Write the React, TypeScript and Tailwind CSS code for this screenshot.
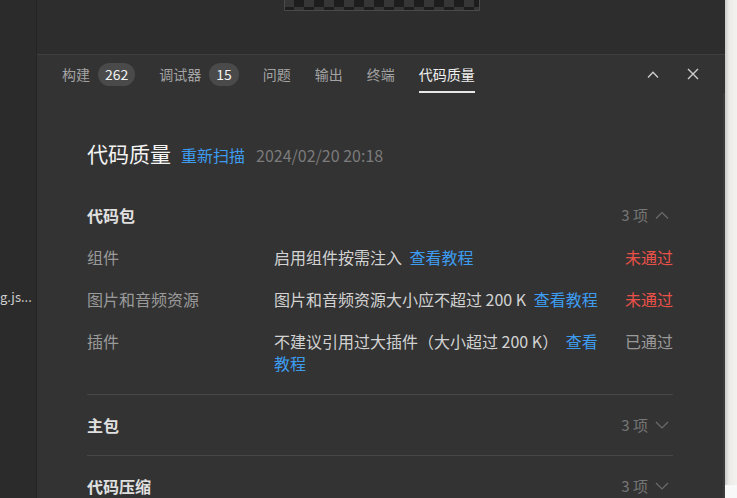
import React from 'react';

type Row = { label: string; desc: string; link: string; status: string; fail: boolean };

const rows: Row[] = [
  { label: '组件', desc: '启用组件按需注入 ', link: '查看教程', status: '未通过', fail: true },
  { label: '图片和音频资源', desc: '图片和音频资源大小应不超过 200 K ', link: '查看教程', status: '未通过', fail: true },
  { label: '插件', desc: '不建议引用过大插件（大小超过 200 K） ', link: '查看教程', status: '已通过', fail: false },
];

const tabs = [
  { name: '构建', badge: '262' },
  { name: '调试器', badge: '15' },
  { name: '问题' },
  { name: '输出' },
  { name: '终端' },
  { name: '代码质量', active: true },
];

function Chevron({ up, className }: { up?: boolean; className?: string }) {
  return (
    <svg width="14" height="8" viewBox="0 0 14 8" className={className} fill="none" stroke="currentColor" strokeWidth="1.2">
      {up ? <path d="M1 7.5 L7 1.5 L13 7.5" /> : <path d="M1 1 L7 7 L13 1" />}
    </svg>
  );
}

function Checker() {
  return (
    <svg width="196" height="11" className="block">
      <defs>
        <pattern id="chk" width="20" height="20" patternUnits="userSpaceOnUse" y="-13">
          <rect width="20" height="20" fill="#363636" />
          <rect width="10" height="10" fill="#1d1d1d" />
          <rect x="10" y="10" width="10" height="10" fill="#1d1d1d" />
        </pattern>
      </defs>
      <rect x="0" y="0" width="196" height="11" fill="url(#chk)" />
      <path d="M0.5 0 V10.5 H195.5 V0" stroke="#4a4a4a" fill="none" />
    </svg>
  );
}

function SectionHeader({ title, open }: { title: string; open?: boolean }) {
  return (
    <div className="flex h-[60px] items-center justify-between">
      <span className="text-[16px] font-bold text-[#e0e0e0]">{title}</span>
      <span className="flex items-center gap-[7px] text-[15px] text-[#767676]">
        3 项
        <Chevron up={open} className="mr-[4px] text-[#6c6c6c]" />
      </span>
    </div>
  );
}

export default function App() {
  return (
    <div className="flex h-[498px] w-[737px] overflow-hidden bg-[#333333] font-['Noto_Sans_CJK_SC',sans-serif]">
      {/* file tree */}
      <div className="w-[37px] shrink-0 overflow-hidden border-r border-[#242424] bg-[#2b2b2b] pt-[287px]">
        <div className="whitespace-nowrap text-[13px] text-[#cfcfcf]">g.js...</div>
      </div>

      <div className="flex w-[688px] shrink-0 flex-col">
        {/* preview area */}
        <div className="h-[55px] shrink-0 border-b border-[#3e3e3e] bg-[#2d2d2d] pl-[247px]">
          <Checker />
        </div>

        {/* tabs */}
        <div className="flex h-[38px] shrink-0 items-center pl-[25px] pr-[22px]">
          <div className="flex h-full items-center gap-[24px] text-[14px]">
            {tabs.map((t) => (
              <div key={t.name} className="flex h-full items-center gap-[8px]">
                <span
                  className={
                    t.active
                      ? 'flex h-full items-center border-b-2 border-[#e8e8e8] pt-[2px] text-[#f0f0f0]'
                      : 'text-[#a3a3a3]'
                  }
                >
                  {t.name}
                </span>
                {t.badge && (
                  <span className="flex h-[23px] items-center rounded-full bg-[#4a4a4a] px-[7px] text-[14px] text-[#f2f2f2]">
                    {t.badge}
                  </span>
                )}
              </div>
            ))}
          </div>
          <div className="ml-auto flex items-center gap-[20px] text-[#cfcfcf]">
            <span className="flex h-[20px] w-[20px] items-center justify-center">
              <svg width="12" height="7" viewBox="0 0 12 7" fill="none" stroke="currentColor" strokeWidth="1.3">
                <path d="M1 6.5 L6 1.2 L11 6.5" />
              </svg>
            </span>
            <span className="flex h-[20px] w-[20px] items-center justify-center">
              <svg width="12" height="12" viewBox="0 0 12 12" fill="none" stroke="currentColor" strokeWidth="1.4">
                <path d="M1 1 L11 11 M11 1 L1 11" />
              </svg>
            </span>
          </div>
        </div>

        {/* content */}
        <div className="relative flex-1 overflow-hidden">
          <div className="absolute right-0 top-0 h-full w-[2px] bg-[#3b3b3b]" />
          <div className="pl-[50px] pr-[52px] pt-[45px]">
            <div className="flex items-baseline leading-[30px]">
              <span className="text-[21px] text-[#f4f4f4]">代码质量</span>
              <span className="ml-[10px] text-[16px] text-[#3d9cf0]">重新扫描</span>
              <span className="ml-[11px] text-[16px] text-[#7b7b7b]">2024/02/20 20:18</span>
            </div>

            <div className="mt-[15px] border-b border-[#464646]">
              <SectionHeader title="代码包" open />
              <div className="grid grid-cols-[187px_330px_1fr] gap-y-[20px] pb-[20px] pt-[1px] text-[16px] leading-[22px]">
                {rows.map((r) => (
                  <React.Fragment key={r.label}>
                    <div className="text-[#9a9a9a]">{r.label}</div>
                    <div className="text-[#d2d2d2]">
                      {r.desc}
                      <span className="ml-[4px] text-[#3d9cf0]">{r.link}</span>
                    </div>
                    <div className={r.fail ? 'text-right text-[#ea5149]' : 'text-right text-[#9a9a9a]'}>{r.status}</div>
                  </React.Fragment>
                ))}
              </div>
            </div>

            <div className="border-b border-[#464646]">
              <SectionHeader title="主包" />
            </div>
            <SectionHeader title="代码压缩" />
          </div>
        </div>
      </div>

      {/* window edge */}
      <div className="flex w-[12px] shrink-0 flex-col bg-[linear-gradient(to_right,#c9c9c9,#eceae6_4px,#f4f2ee)]">
        <div className="flex-1" />
        <div className="h-[13px] bg-[#f8f8f8]" />
      </div>
    </div>
  );
}
